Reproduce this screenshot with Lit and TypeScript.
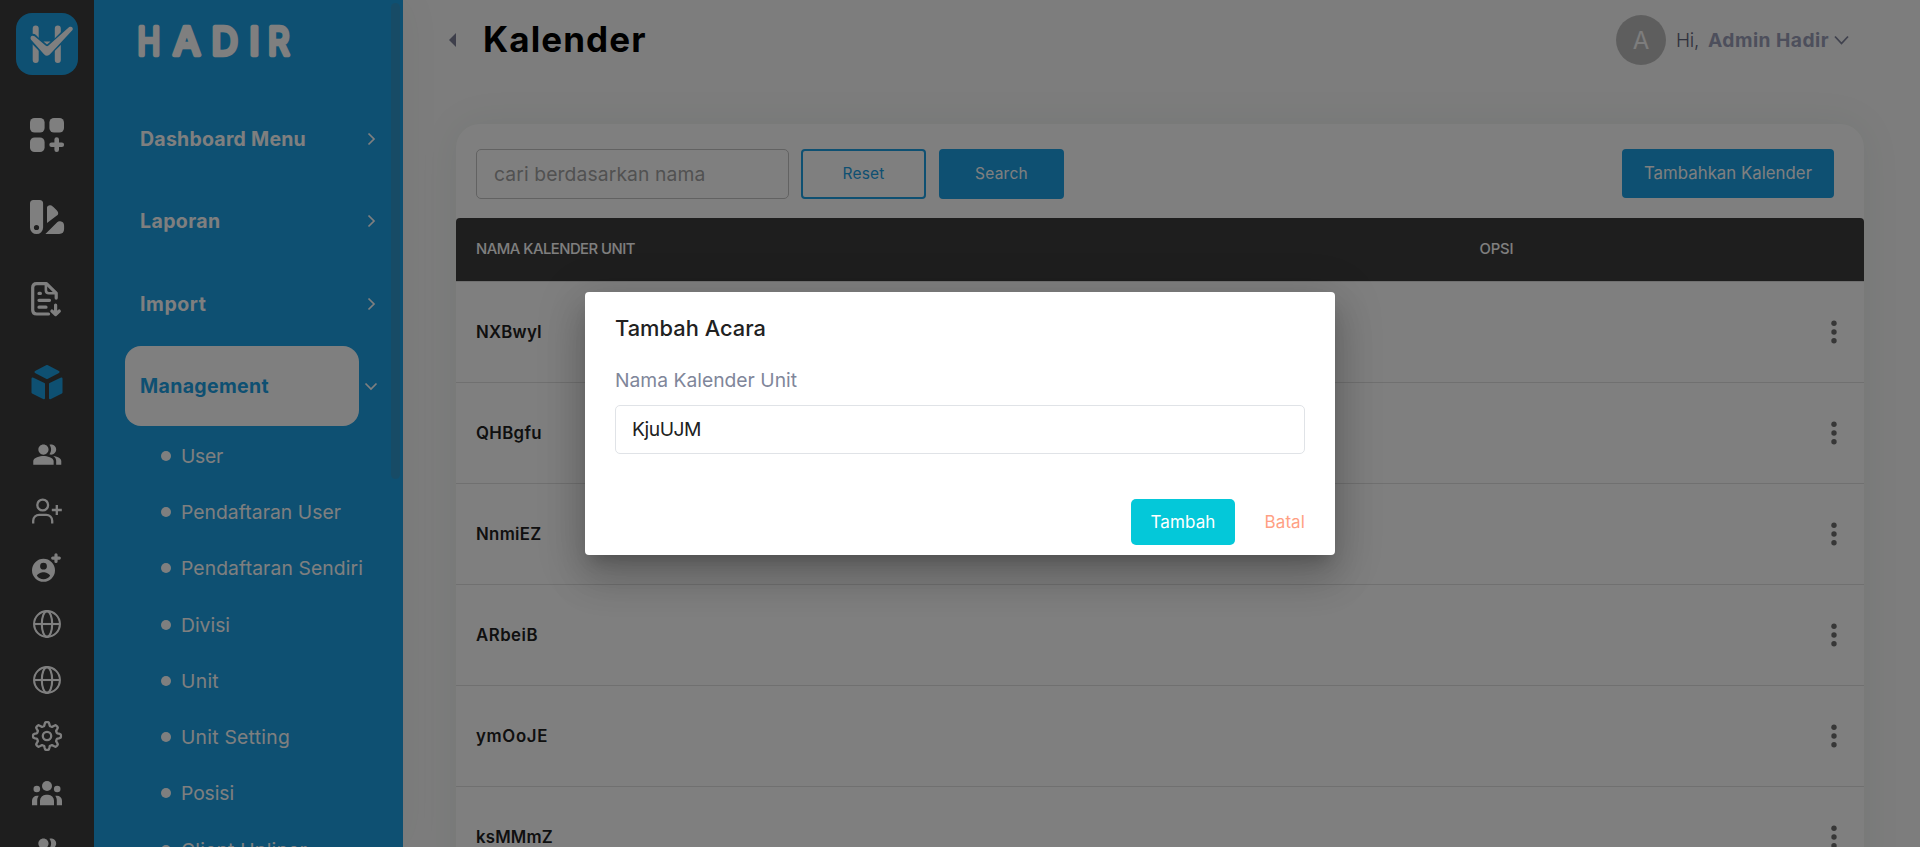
import { LitElement, html, css, svg } from "lit";
import { customElement, property } from "lit/decorators.js";

/** A line of text whose tracking is adjusted so that it spans `w` pixels. */
@customElement("fit-text")
class FitText extends LitElement {
  @property({ type: Number }) w = 0;
  @property() text = "";
  static styles = css`
    :host { display: inline-block; white-space: pre; }
  `;
  render() {
    return html`<span>${this.text}</span>`;
  }
  updated() {
    const el = this.renderRoot.querySelector("span") as HTMLElement;
    el.style.letterSpacing = "0px";
    const natural = el.getBoundingClientRect().width;
    el.style.letterSpacing = `${(this.w - natural) / this.text.length}px`;
  }
}

const t = (text: string, w: number) => html`<fit-text .text=${text} .w=${w}></fit-text>`;

const users = svg`<path transform="translate(4 3.400) scale(1.273)" d="M16.67 13.13C18.04 14.06 19 15.32 19 17v3h4v-3c0-2.18-3.57-3.47-6.33-3.87zM15 12c2.21 0 4-1.79 4-4s-1.79-4-4-4c-.47 0-.91.1-1.33.24C14.5 5.27 15 6.58 15 8s-.5 2.73-1.33 3.76c.42.14.86.24 1.33.24zM9 12c2.21 0 4-1.79 4-4s-1.79-4-4-4-4 1.79-4 4 1.79 4 4 4zM9 13c-2.67 0-8 1.34-8 4v3h16v-3c0-2.66-5.33-4-8-4z"/>`;
const globe = svg`<g fill="none" stroke="currentColor" stroke-width="2.100"><circle cx="19" cy="19" r="12.900"/><ellipse cx="19" cy="19" rx="5.200" ry="12.900"/><path d="M6 19h26"/></g>`;

const gearPath = (() => {
  const pts: string[] = [];
  const n = 96;
  for (let i = 0; i < n; i++) {
    const a = (i / n) * Math.PI * 2;
    const c = Math.cos(a * 8);
    const r = 12.1 + 1.9 * Math.tanh(c * 2.2);
    pts.push(`${(19 + r * Math.sin(a)).toFixed(2)} ${(19 - r * Math.cos(a)).toFixed(2)}`);
  }
  return `M${pts.join("L")}Z`;
})();

const bigIcons = [
  svg`<rect x="2" y="2" width="14.6" height="14.6" rx="4.6"/><rect x="21.4" y="2" width="14.6" height="14.6" rx="4.6"/><rect x="2" y="21.4" width="14.6" height="14.6" rx="4.6"/><path d="M28.7 23.6v10.2M23.6 28.7h10.2" stroke="currentColor" stroke-width="4.6" stroke-linecap="round"/>`,
  svg`<path fill-rule="evenodd" d="M5.5 2h6.1a3.5 3.5 0 0 1 3.5 3.5v24a6.5 6.5 0 0 1-13.1 0v-24A3.5 3.5 0 0 1 5.500 2zM8.500 26.900a2.600 2.600 0 1 0 0 5.200 2.600 2.600 0 0 0 0-5.200z"/><path d="M19 25V9.500c0-1.400 1.800-2.600 3.400-2.300 1.200.2 2 .8 3 1.800l2.800 2.700c1.700 1.700 2.300 3 1.900 4.200-.2.700-.6 1.100-1.200 1.700z"/><path d="M17.400 36 29.200 24.200c.9-.9 1.700-1.200 3-1 2.600.3 3.900 1.800 3.900 4.500v3.400c0 3.200-1.700 4.900-4.900 4.900z"/>`,
  svg`<g transform="translate(0 -2)" fill="none" stroke="currentColor" stroke-width="3.200" stroke-linecap="round" stroke-linejoin="round"><path d="M20.500 35H8.700c-2.700 0-4-1.300-4-4V8.600c0-2.700 1.300-4 4-4h9.800l9.700 9.500v5"/><path d="M17.900 5v6.200c0 2.200.9 3.100 3.100 3.100h6.800" stroke-width="2.600"/><path d="M11 14.400h1.400M11 21.300h10.500M11 28.200h7"/><path d="M27.600 26v9M23.900 32l3.700 3.600 3.700-3.600"/></g>`,
  svg`<g stroke="currentColor" stroke-width="2" stroke-linejoin="round"><path d="M19 3 30.500 9 19 15 7.500 9z"/><path d="M4.500 15.500 16 21v14.300L4.500 29.600z"/><path d="M33.500 15.500 22 21v14.300l11.500-5.700z"/></g>`,
];

const smallIcons = [
  users,
  svg`<g fill="none" stroke="currentColor" stroke-width="2.300"><circle cx="14.700" cy="13" r="5.400"/><path d="M5.200 31.400v-2.600a6 6 0 0 1 6-6h7a6 6 0 0 1 6 6v2.600M28.800 13v10M23.800 18h10"/></g>`,
  svg`<g transform="translate(0 1.200)"><path fill-rule="evenodd" d="M15.500 9.600a11.500 11.500 0 1 0 0 23 11.500 11.500 0 0 0 0-23zm0 4a3.400 3.400 0 1 1 0 6.800 3.400 3.400 0 0 1 0-6.800zm0 16.400c-2.900 0-5.100-1.200-6.600-3.400.8-2.300 4.300-3.600 6.600-3.600s5.800 1.300 6.600 3.600c-1.500 2.200-3.700 3.400-6.600 3.400z"/><path d="M28 5.600v6.600M24.700 8.900h6.600" stroke="currentColor" stroke-width="3.200" stroke-linecap="round"/></g>`,
  globe,
  globe,
  svg`<g fill="none" stroke="currentColor" stroke-width="2.300" stroke-linejoin="round"><path d="${gearPath}"/><circle cx="19" cy="19" r="4.200"/></g>`,
  svg`<circle cx="19" cy="12" r="5"/><circle cx="8.800" cy="15" r="3.300"/><circle cx="29.200" cy="15" r="3.300"/><path d="M12 31.300v-4.500a6 6 0 0 1 6-6h2a6 6 0 0 1 6 6v4.500zM4 31.300v-4.500a5 5 0 0 1 5-5h1.700c-1 1.500-1.500 3-1.500 5v4.500zM34 31.300v-4.500a5 5 0 0 0-5-5h-1.700c1 1.500 1.500 3 1.500 5v4.500z"/>`,
  users,
];

const menu = [
  { label: "Dashboard Menu", w: 166 },
  { label: "Laporan", w: 80.5 },
  { label: "Import", w: 66.5 },
  { label: "Management", w: 129 },
];
const sub: [string, number][] = [
  ["User", 42], ["Pendaftaran User", 160], ["Pendaftaran Sendiri", 182], ["Divisi", 49],
  ["Unit", 38], ["Unit Setting", 109], ["Posisi", 53], ["Client Upliner", 126],
];
const rows: [string, number][] = [
  ["NXBwyI", 66], ["QHBgfu", 66], ["NnmiEZ", 65.5], ["ARbeiB", 62], ["ymOoJE", 72], ["ksMMmZ", 77],
];

@customElement("app-root")
class AppRoot extends LitElement {
  static styles = css`
    :host {
      display: block; position: relative; width: 1920px; height: 847px; overflow: hidden;
      font-family: "Inter", "Liberation Sans", sans-serif; background: #fafafa; color: #212121;
    }
    * { box-sizing: border-box; }
    .app { display: flex; height: 847px; overflow: hidden; }
    .rail { width: 94px; flex: none; background: #3c3c3c; color: #fff; display: flex; flex-direction: column; align-items: center; overflow: hidden; }
    .rail svg { display: block; flex: none; fill: currentColor; }
    .brand { height: 93.800px; flex: none; padding-top: 13px; }
    .slot { height: 82.330px; flex: none; display: flex; align-items: center; }
    .slot.on { color: #1ca0e4; }
    .slot.small { height: 56.300px; }
    .gap { height: 3.500px; flex: none; }
    .side { width: 309px; flex: none; background: #1ca0e4; color: #fff; position: relative; overflow: hidden; display: flex; flex-direction: column; }
    .wrap { display: flex; box-shadow: 0 0 42px rgba(0, 80, 50, .05); z-index: 1; }
    .thumb { position: absolute; left: 297px; top: 3px; width: 9px; height: 476px; border-radius: 5px; background: rgba(82, 135, 160, .35); }
    .word { height: 98px; flex: none; display: block; }
    .mi { height: 82.300px; flex: none; display: flex; align-items: center; padding-left: 31px; font-weight: 700; font-size: 19.500px; }
    .pill { width: 234px; height: 80px; border-radius: 16px; padding-left: 15px; display: flex; align-items: center; margin-right: 5px; }
    .on .pill { background: #fff; color: #1ca0e4; }
    .mi svg { width: 14px; height: 14px; }
    .list { padding-top: .6px; display: flex; flex-direction: column; }
    .si { height: 56.250px; flex: none; display: flex; align-items: center; padding-left: 67px; font-size: 19.300px; font-weight: 400; }
    .dot { width: 10px; height: 10px; border-radius: 5px; background: #fff; margin-right: 10px; }
    .main { flex: 1; display: flex; flex-direction: column; padding: 0 56px 0 53px; }
    .top { height: 124px; flex: none; padding-bottom: 44px; display: flex; align-items: center; }
    .tri { width: 0; height: 0; border: 7px solid transparent; border-left: 0; border-right-color: #7c7f96; margin: 0 27px 0 -7px; }
    h1 { margin: 0; font-size: 35px; font-weight: 700; color: #000; flex: 1; line-height: 42px; padding-bottom: 2px; }
    .avatar { width: 50px; height: 50px; border-radius: 50%; background: #bdbdbd; color: #fafafa; font-size: 24px; font-weight: 400; display: flex; align-items: center; justify-content: center; margin-right: 10px; }
    .hi { font-size: 19px; font-weight: 350; color: #5e6278; margin-right: 9px; }
    .who { font-size: 19.200px; font-weight: 700; color: #9a9eb8; margin-right: 5px; }
    .acct { display: flex; align-items: center; margin-right: 14px; }
    .card { flex: 1; background: #fff; border-radius: 24px 24px 0 0; box-shadow: 0 0 42px rgba(0, 80, 50, .07); margin-bottom: -20px; }
    .bar { height: 94px; padding: 25px 30px 0 20px; display: flex; align-items: flex-start; }
    .search { width: 313px; height: 50px; border: 1px solid #c4c4c4; border-radius: 5px; color: #a3a3a3; font-size: 19.300px; font-weight: 400; display: flex; align-items: center; padding-left: 17px; margin-right: 12px; }
    .btn { width: 125px; height: 50px; border-radius: 4px; background: #1ca0e4; border: 2px solid #1ca0e4; color: #fff; font-size: 15.500px; display: flex; align-items: center; justify-content: center; margin-right: 13px; padding-bottom: 2px; }
    .btn.line { background: #fff; color: #1ca0e4; }
    .btn.add { width: 212px; height: 49px; font-size: 16.800px; margin: 0 0 0 auto; }
    .thead { height: 63px; background: #3c3c3c; color: #fff; border-radius: 4px 4px 0 0; display: grid; grid-template-columns: 1003.500px 1fr; align-items: center; padding: 0 0 2px 20px; font-size: 14.800px; font-weight: 500; }
    .row { height: 101px; border-top: 1px solid #e0e0e0; display: flex; align-items: center; justify-content: space-between; padding: 0 26px 0 20px; font-size: 16.800px; font-weight: 600; color: #212121; }
    .row svg { width: 8px; height: 26px; fill: #6e6e6e; }
    .overlay { position: absolute; inset: 0; background: rgba(0, 0, 0, .5); z-index: 5; display: flex; align-items: center; justify-content: center; }
    .modal { width: 750px; height: 263px; background: #fff; border-radius: 4px; padding: 22px 30px 10px; display: flex; flex-direction: column;
      box-shadow: 0 11px 15px -7px rgba(0,0,0,.2), 0 24px 38px 3px rgba(0,0,0,.14), 0 9px 46px 8px rgba(0,0,0,.12); }
    .title { font-size: 21.800px; font-weight: 450; line-height: 29px; height: 51px; color: #212121; }
    .label { font-size: 19.300px; line-height: 30px; height: 40px; color: #80869a; font-weight: 400; }
    .field { height: 49px; border: 1px solid #e0e3e7; border-radius: 5px; padding: 0 16px 2px; display: flex; align-items: center; font-size: 19.300px; color: #212121; }
    .acts { margin-top: auto; display: flex; justify-content: flex-end; align-items: center; font-size: 17px; }
    .ok { width: 104px; height: 46px; border-radius: 5px; background: #04c8d9; color: #fff; display: flex; align-items: center; justify-content: center; margin-right: 29.500px; }
    .cancel { color: #ff9f84; }
  `;

  render() {
    return html`
      <div class="app">
        <div class="wrap">
          <nav class="rail">
            <div class="brand">
              <svg width="62" height="62" viewBox="0 0 62 62">
                <rect width="62" height="62" rx="16" fill="#1ca0e4"/>
                <g fill="none" stroke="#fff" stroke-width="6" stroke-linecap="round"><path d="M19.700 15.500V47M41.800 15.500V47"/></g>
                <path d="M27.500 28.500h7l-3.500 3z" fill="#fff"/>
                <path d="M16.800 25.200 29.300 38q1.600 1.500 3.200-.2L55 15.500" fill="none" stroke="#1ca0e4" stroke-width="9" stroke-linecap="round"/>
                <path d="M14.800 23.800c-.5 1.200-.3 2.300.5 3.200L28 41.200c2 2.100 4.200 2 6.200-.1L56.500 17c1.200-2-1-4.300-3.300-2.900L32.500 32.600c-1 .9-1.900.9-2.900 0L18.500 23.300c-1.500-1-3.100-.8-3.700.5z" fill="#fff"/>
              </svg>
            </div>
            ${bigIcons.map((i, n) => html`<div class="slot ${n === 3 ? "on" : ""}"><svg width="38" height="38" viewBox="0 0 38 38">${i}</svg></div>`)}
            <div class="gap"></div>
            ${smallIcons.map((i) => html`<div class="slot small"><svg width="38" height="38" viewBox="0 0 38 38">${i}</svg></div>`)}
          </nav>
          <nav class="side">
            <svg class="word" width="309" height="98">
              <g fill="#fff" stroke="#fff" stroke-width="4.400" stroke-linejoin="round" font-family="Inter" font-weight="400" font-size="38.200">
                <text transform="translate(43.500 55) scale(.8 1)">H</text>
                <text transform="translate(79.200 55) scale(1.02 1)">A</text>
                <text transform="translate(117.500 55) scale(.96 1)">D</text>
                <text transform="translate(155.300 55)">I</text>
                <text transform="translate(174 55) scale(.87 1)">R</text>
              </g>
            </svg>
            ${menu.map((m, n) => html`<div class="mi ${n === 3 ? "on" : ""}">
              <div class="pill">${t(m.label, m.w)}</div>
              <svg viewBox="0 0 14 14" fill="none" stroke="#fff" stroke-width="1.700"><path d=${n === 3 ? "M1.500 4.500 7 10l5.500-5.500" : "M4.500 1.500 10 7l-5.500 5.500"}/></svg>
            </div>`)}
            <div class="list">${sub.map(([s, w]) => html`<div class="si"><span class="dot"></span>${t(s, w)}</div>`)}</div>
            <div class="thumb"></div>
          </nav>
        </div>
        <main class="main">
          <header class="top">
            <span class="tri"></span>
            <h1>${t("Kalender", 163.5)}</h1>
            <div class="acct">
              <span class="avatar">A</span>
              <span class="hi">${t("Hi,", 23)}</span>
              <span class="who">${t("Admin Hadir", 121)}</span>
              <svg width="16" height="12" viewBox="0 0 16 12" fill="none" stroke="#80849c" stroke-width="1.800"><path d="m1 2.500 6.500 7 6.500-7"/></svg>
            </div>
          </header>
          <section class="card">
            <div class="bar">
              <div class="search">${t("cari berdasarkan nama", 211.5)}</div>
              <div class="btn line">${t("Reset", 42)}</div>
              <div class="btn">${t("Search", 53)}</div>
              <div class="btn add">${t("Tambahkan Kalender", 168)}</div>
            </div>
            <div class="thead"><div>${t("NAMA KALENDER UNIT", 159)}</div><div>${t("OPSI", 34)}</div></div>
            ${rows.map(([r, w]) => html`<div class="row">${t(r, w)}
              <svg viewBox="0 0 8 26"><circle cx="4" cy="4.300" r="2.700"/><circle cx="4" cy="13" r="2.700"/><circle cx="4" cy="21.700" r="2.700"/></svg></div>`)}
          </section>
        </main>
      </div>
      <div class="overlay">
        <div class="modal" role="dialog">
          <div class="title">${t("Tambah Acara", 151)}</div>
          <div class="label">${t("Nama Kalender Unit", 182)}</div>
          <div class="field">${t("KjuUJM", 69)}</div>
          <div class="acts"><div class="ok">${t("Tambah", 65)}</div><div class="cancel">${t("Batal", 40.5)}</div></div>
        </div>
      </div>
    `;
  }
}
